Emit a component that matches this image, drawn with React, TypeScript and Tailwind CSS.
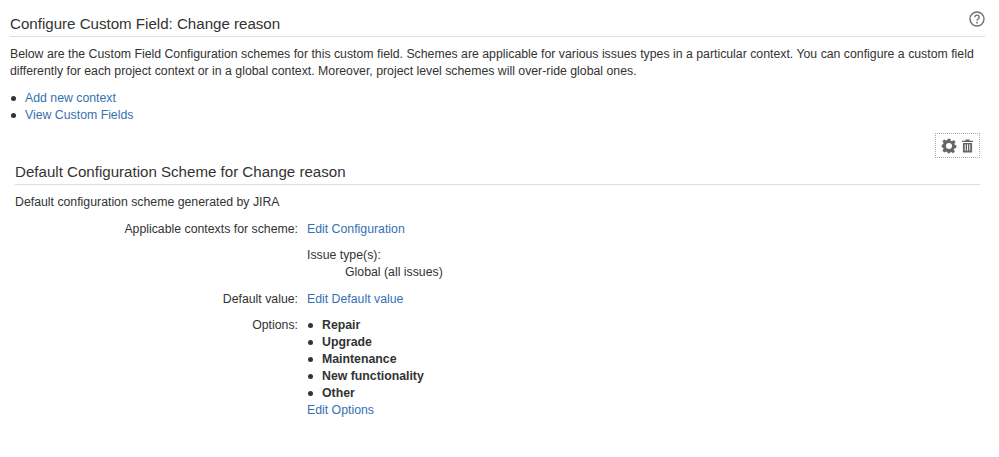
import React from "react";

const A = ({ children }: { children: React.ReactNode }) => (
  <a href="#" className="text-[#3572b0]">{children}</a>
);

const Dot = () => <span className="w-[5px] h-[5px] rounded-full bg-[#333333] shrink-0" />;

const Bullet = ({ children, cls }: { children: React.ReactNode; cls: string }) => (
  <li className={`flex items-center h-[17px] ${cls}`}>
    <Dot />
    <span>{children}</span>
  </li>
);

export default function App() {
  const options = ["Repair", "Upgrade", "Maintenance", "New functionality", "Other"];
  return (
    <div className="w-[999px] h-[457px] bg-white text-[#333333] text-[12.3px] leading-[17px] font-['Liberation_Sans',Arial,sans-serif] overflow-hidden pl-[10px] pr-[14px]">
      <div className="flex items-center justify-between h-[37px] pt-[10px] border-b border-[#dddddd]">
        <h1 className="text-[15.1px] font-normal leading-[20px] mt-[1px]">Configure Custom Field: Change reason</h1>
        <svg width="16" height="16" viewBox="0 0 16 16" fill="none" className="-mt-[9px]">
          <circle cx="8" cy="8" r="7" stroke="#707070" strokeWidth="1.4" />
          <path d="M5.9 6.2a2.1 2.1 0 1 1 3.2 1.8C8.4 8.4 8 8.8 8 9.7" stroke="#707070" strokeWidth="1.4" />
          <circle cx="8" cy="11.7" r="0.9" fill="#707070" />
        </svg>
      </div>
      <p className="mt-[9px]">
        Below are the Custom Field Configuration schemes for this custom field. Schemes are applicable for various issues types in a particular context. You can configure a custom field differently for each project context or in a global context. Moreover, project level schemes will over-ride global ones.
      </p>
      <ul className="mt-[10px]">
        <Bullet cls="gap-[9px] pl-[1px]"><A>Add new context</A></Bullet>
        <Bullet cls="gap-[9px] pl-[1px]"><A>View Custom Fields</A></Bullet>
      </ul>

      <div className="flex justify-end mt-[9px] pr-[5px]">
        <div className="flex items-center gap-[5px] w-[45px] h-[25px] pl-[5px] border border-dotted border-[#aaaaaa]">
          <svg width="16" height="16" viewBox="0 0 24 24" fill="#666666">
            <path fillRule="evenodd" d="M10 1h4l.6 3.1 1.9.8 2.6-1.8 2.8 2.8-1.8 2.6.8 1.9L23 11v4l-3.1.6-.8 1.9 1.8 2.6-2.8 2.8-2.6-1.8-1.9.8L13 23h-3l-.6-2.1-1.9-.8-2.6 1.8-2.8-2.8 1.8-2.6-.8-1.9L1 14v-4l2.1-.6.8-1.9-1.8-2.6 2.8-2.8 2.6 1.8 1.9-.8L10 1Zm2 6.5a4.5 4.5 0 1 0 0 9 4.5 4.5 0 0 0 0-9Z" />
          </svg>
          <svg width="11" height="14" viewBox="0 0 12 14" fill="#666666">
            <path fillRule="evenodd" d="M4 0h4l.5 1.2H12v1.5H0V1.2h3.5L4 0ZM1 3.6h10V14H1V3.6Zm2 1.6v7h1v-7H3Zm2.5 0v7h1v-7h-1Zm2.5 0v7h1v-7H8Z" />
          </svg>
        </div>
      </div>

      <div className="pl-[5px] pr-[5px]">
        <h2 className="h-[27px] text-[15.1px] leading-[28px] font-normal border-b border-[#dddddd]">
          Default Configuration Scheme for Change reason
        </h2>
        <p className="mt-[9px]">Default configuration scheme generated by JIRA</p>

        <div className="grid grid-cols-[283px_1fr] gap-x-[9px] mt-[10px]">
          <div className="text-right">Applicable contexts for scheme:</div>
          <div><A>Edit Configuration</A></div>

          <div />
          <div className="mt-[9px]">
            <div>Issue type(s):</div>
            <div className="pl-[38px]">Global (all issues)</div>
          </div>

          <div className="text-right mt-[10px]">Default value:</div>
          <div className="mt-[10px]"><A>Edit Default value</A></div>

          <div className="text-right mt-[9px]">Options:</div>
          <div className="mt-[9px]">
            <ul>
              {options.map((o) => (
                <Bullet key={o} cls="gap-[9px] pl-[1px] font-bold">{o}</Bullet>
              ))}
            </ul>
            <A>Edit Options</A>
          </div>
        </div>
      </div>
    </div>
  );
}
